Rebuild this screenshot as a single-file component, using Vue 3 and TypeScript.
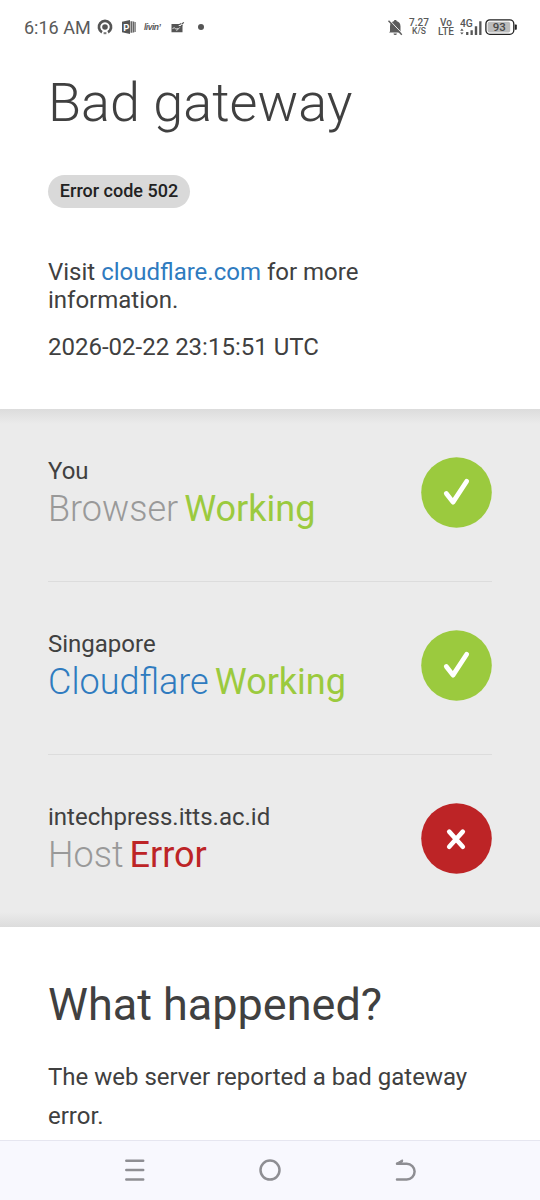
<script setup lang="ts">
interface Hop {
  place: string
  name: string
  tone: 'muted' | 'link'
  ok: boolean
}

const hops: Hop[] = [
  { place: 'You', name: 'Browser', tone: 'muted', ok: true },
  { place: 'Singapore', name: 'Cloudflare', tone: 'link', ok: true },
  { place: 'intechpress.itts.ac.id', name: 'Host', tone: 'muted', ok: false },
]
</script>

<template>
  <div class="screen">
    <header class="status">
      <span class="clock">6:16 AM</span>
      <svg class="ring" width="16" height="16" viewBox="0 0 16 16">
        <path d="M5 13.3A6.1 6.1 0 1 1 11 13.3" fill="none" stroke="#555" stroke-width="2.7" />
        <circle cx="8" cy="8" r="2.8" fill="#555" />
        <path d="M6.6 13.2h2.8v2H6.6z" fill="#777" />
      </svg>
      <svg class="slides" width="14" height="14" viewBox="0 0 14 14">
        <path d="M0 1.8 8 0v14L0 12.2z" fill="#555" />
        <path d="M8.5 1.3h2v11.4h-2zM11 1.5h1.2v11H11zM12.6 1.9h1.1v10.2h-1.1z" fill="#666" />
        <text x="1.2" y="10.6" font-size="9.5" font-weight="700" fill="#fff">P</text>
      </svg>
      <span class="livin">livin’</span>
      <svg class="mail" width="14" height="11" viewBox="0 0 14 11">
        <path d="M.5 2h8l-1 2h3l1-1v7.3H.5z" fill="#555" />
        <path d="m1.5 6.5 2-.8 1.3 1.5 2-.8M5.5 8.8 8.8 5.4" fill="none" stroke="#fff" stroke-width=".8" />
        <path d="M8 2.8 10.3 1.5M11 2l1.8-1.6M10 4l1.4-1" stroke="#555" stroke-width="1.2" />
      </svg>
      <i class="dot"></i>
      <span class="spacer"></span>
      <svg class="bell" width="15" height="17" viewBox="0 0 15 17">
        <path d="M2 12.5V7.2C2 4.4 3.8 2.5 6.2 2V.9h2.2V2c2.5.5 4.1 2.4 4.1 5.2v5.3l1 1H1zM5.5 14.4h3.4a1.7 1.7 0 0 1-3.4 0z" fill="#5c5c5c" />
        <path d="M1.4 1 14.8 15.2" stroke="#fff" stroke-width="1" />
        <path d="M.5 1.7 13.8 15.8" stroke="#5c5c5c" stroke-width="1.4" />
      </svg>
      <span class="pair speed"><b>7.27</b><b class="unit">K/S</b></span>
      <span class="pair volte"><b>Vo</b><b>LTE</b></span>
      <svg class="signal" width="25" height="20" viewBox="0 -3 25 20">
        <text x="0" y="8" font-size="10.3" font-weight="500" fill="#555">4G</text>
        <path d="m.2 11.8 1.7-2.2 1.7 2.2zM.2 13.4h3.4l-1.7 2.2z" fill="#555" />
        <path d="M6.1 13.1h2.3V16H6.1zM10.5 11.2h2.3V16h-2.3zM14.8 7.2h2.4V16h-2.4zM19.2 2.3h2.3V16h-2.3z" fill="#555" />
      </svg>
      <svg class="battery" width="33" height="17" viewBox="0 0 33 17">
        <rect x=".9" y=".9" width="27.9" height="14.4" rx="4" fill="#fff" stroke="#222" stroke-width="1.3" />
        <rect x="2.6" y="2.7" width="22.6" height="10.8" rx="2" fill="#bcbcbc" />
        <path d="M29.8 5.5h1.3q.7 0 .7.8v3.6q0 .8-.7.8h-1.3z" fill="#222" />
        <text x="14.2" y="12" text-anchor="middle" font-size="11.5" font-weight="500" fill="#484848">93</text>
      </svg>
    </header>

    <main>
      <section class="intro">
        <h1>Bad gateway</h1>
        <span class="code">Error code 502</span>
        <p>Visit <a>cloudflare.com</a> for more<br />information.</p>
        <p class="time">2026-02-22 23:15:51 UTC</p>
      </section>

      <section class="hops">
        <article v-for="hop in hops" :key="hop.place" class="hop">
          <div>
            <div class="place">{{ hop.place }}</div>
            <div class="state">
              <span :class="hop.tone">{{ hop.name }}</span>
              <span :class="hop.ok ? 'good' : 'bad'">{{ hop.ok ? 'Working' : 'Error' }}</span>
            </div>
          </div>
          <svg class="badge" viewBox="0 0 71 71">
            <circle cx="35.5" cy="35.5" r="35.3" :fill="hop.ok ? '#9bca3e' : '#bd2426'" />
            <path v-if="hop.ok" d="m25.3 36.5 6.7 8.6L45.7 24.3" class="mark check" />
            <path v-else d="m28.2 28.6 13.6 15.1M41.8 28.6 28.2 43.7" class="mark cross" />
          </svg>
        </article>
      </section>

      <section class="what">
        <h2>What happened?</h2>
        <p>The web server reported a bad gateway error.</p>
      </section>
    </main>

    <nav class="nav">
      <svg width="24" height="24" viewBox="0 0 24 24"><path d="M3.3 2.8h16.9M3.3 12.1h16.9M3.3 21.4h16.9" /></svg>
      <svg width="24" height="24" viewBox="0 0 24 24"><circle cx="12" cy="12.1" r="9.5" /></svg>
      <svg width="24" height="24" viewBox="0 0 24 24"><path d="M4 5.8h9.8a7.8 7.8 0 0 1 0 15.6H4" /><path d="M3.6 5.2 9.4 1.8 9.8 3 8.2 5.5z" class="tip" /></svg>
    </nav>
  </div>
</template>

<style>
html, body { margin: 0; background: #fff; }
</style>

<style scoped>
.screen {
  width: 540px;
  height: 1200px;
  overflow: hidden;
  display: flex;
  flex-direction: column;
  background: #fff;
  color: #404040;
  font-family: Roboto, sans-serif;
}
.status {
  height: 54px;
  flex: none;
  box-sizing: border-box;
  padding: 0 23px 0 24px;
  display: flex;
  align-items: center;
  color: #5a5a5a;
}
.status svg { flex: none; }
.clock { width: 66px; font-size: 18px; line-height: 20px; padding-top: 1px; white-space: nowrap; }
.ring { margin-left: 7px; }
.slides { margin-left: 9px; }
.livin { margin-left: 8px; width: 17px; font: italic 700 8.5px/10px "Liberation Sans", sans-serif; letter-spacing: -.5px; white-space: nowrap; }
.mail { margin-left: 10px; }
.dot { margin-left: 13px; width: 6px; height: 6px; border-radius: 50%; background: #555; }
.spacer { flex: 1; }
.bell { margin-right: 6px; }
.pair { display: flex; flex-direction: column; align-items: center; font-size: 10px; line-height: 9px; }
.pair b { font-weight: 500; }
.speed { width: 20px; margin-right: 9px; }
.pair .unit { font-size: 8.5px; }
.volte { width: 16px; margin-right: 6px; }
.signal { margin: -3px 0 0; }
.battery { margin-right: -1px; }

main { flex: 1; min-height: 0; overflow: hidden; }
h1, h2, p { margin: 0; }
.intro { height: 355px; box-sizing: border-box; padding: 15px 48px 0; }
h1 { font-size: 54px; line-height: 68px; font-weight: 300; }
.code {
  display: block;
  width: 142px;
  height: 33px;
  margin: 38px 0 50.4px;
  border-radius: 17px;
  background: #d9d9d9;
  color: #222;
  font-size: 18px;
  line-height: 32px;
  font-weight: 500;
  text-align: center;
}
p { font-size: 24px; line-height: 28px; }
.intro p { width: 350px; }
.intro .time { margin-top: 18.2px; }
a { color: #2f7bbf; }

.hops {
  height: 518px;
  box-sizing: border-box;
  padding: 0 48px;
  background: linear-gradient(#dcdcdc, #ebebeb 15px, #ebebeb calc(100% - 15px), #dcdcdc);
}
.hop {
  height: 173px;
  box-sizing: border-box;
  padding-top: 48px;
  display: flex;
  justify-content: space-between;
  align-items: flex-start;
  border-bottom: 1px solid #dcdcdc;
}
.hop:last-child { border-bottom: 0; }
.place { font-size: 24px; line-height: 28.8px; }
.state { display: flex; gap: 6px; font-size: 36px; line-height: 46.4px; white-space: nowrap; }
.muted { color: #999; font-weight: 300; }
.link { color: #2f7bbf; font-weight: 300; }
.good { color: #9bca3e; }
.bad { color: #bd2426; }
.badge { width: 71px; height: 71px; flex: none; }
.mark { fill: none; stroke: #fff; stroke-linecap: round; stroke-linejoin: round; }
.check { stroke-width: 4.8; }
.cross { stroke-width: 4.6; }

.what { padding: 50px 48px 0; }
h2 { font-size: 45px; line-height: 56px; font-weight: 400; }
.what p { margin-top: 25px; line-height: 39px; }

.nav {
  height: 60px;
  flex: none;
  box-sizing: border-box;
  padding: 0 67.5px 1px;
  border-top: 1px solid #e6e6f0;
  background: #f8f8fe;
  display: flex;
  align-items: center;
}
.nav svg { flex: none; margin: 0 55.5px; fill: none; stroke: #8e8e93; stroke-width: 2.5; stroke-linecap: round; stroke-linejoin: round; }
.nav .tip { fill: #8e8e93; stroke-width: 1; }
</style>
